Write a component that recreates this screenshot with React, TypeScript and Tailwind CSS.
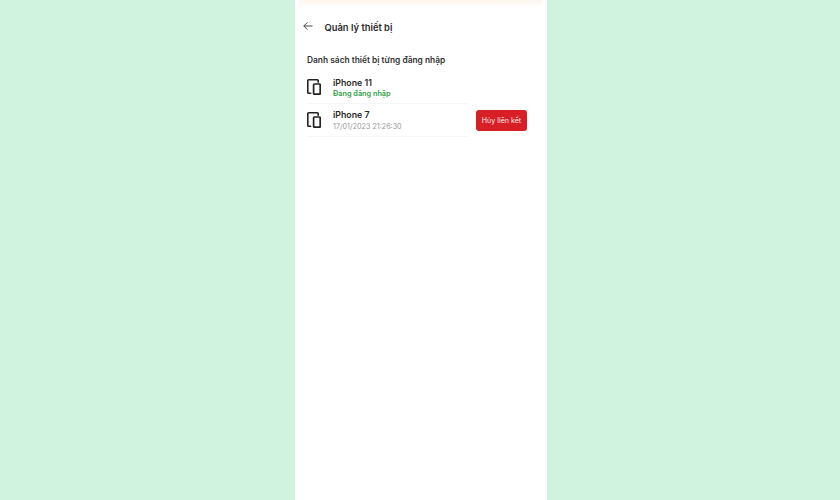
const DeviceIcon = () => (
  <svg width="14" height="16" viewBox="0 0 14 16" fill="none" stroke="#222" strokeWidth="1.6" className="shrink-0">
    <path d="M4.2 14.2H1.6A.8.8 0 0 1 .8 13.4V1.6A.8.8 0 0 1 1.6 .8H10.4A.8.8 0 0 1 11.2 1.6V3.8" />
    <rect x="6.6" y="5" width="6.6" height="10.2" rx=".8" strokeWidth="1.7" />
  </svg>
);

export default function App() {
  return (
    <div className="h-[500px] w-[840px] overflow-hidden bg-[#cff3de] flex pl-[295px] font-['Inter',sans-serif] antialiased">
      <div className="w-[252px] h-full bg-white flex flex-col">
        {/* --- HEADER --- */}
        <div className="h-[7px] mx-[5px] bg-gradient-to-b from-[#fef6ee] to-white" />
        <header className="flex items-center mt-[13px] h-[16px] pl-[8px]">
          <svg width="10" height="10" viewBox="0 0 10 10" fill="none" stroke="#333" strokeWidth="0.9" className="-mt-[5px]">
            <path d="M9.5 5H.8M4.4 1.4.8 5l3.6 3.6" />
          </svg>
          <h1 className="ml-[11.5px] text-[9.4px] font-semibold text-[#2a2a2a] leading-none">Quản lý thiết bị</h1>
        </header>

        <h2 className="mt-[18px] ml-[12px] text-[8.4px] font-semibold text-[#333] leading-[12px]">
          Danh sách thiết bị từng đăng nhập
        </h2>

        {/* --- DEVICE LIST --- */}
        <div className="mt-[5px] ml-[12px] mr-[20px]">
          <div className="flex items-center w-[161px] h-[33px] border-b border-[#f6f6f6]">
            <DeviceIcon />
            <div className="ml-[12px] mt-[2px]">
              <div className="text-[8.8px] font-semibold text-[#2a2a2a] leading-[12px]">iPhone 11</div>
              <div className="text-[7.3px] font-semibold text-[#2ea043] leading-[10px]">Đang đăng nhập</div>
            </div>
          </div>
          <div className="flex items-center h-[33px]">
            <div className="flex items-center w-[161px] self-stretch border-b border-[#f6f6f6]">
              <DeviceIcon />
              <div className="ml-[12px] mt-[1px]">
                <div className="text-[8.8px] font-semibold text-[#2a2a2a] leading-[12px]">iPhone 7</div>
                <div className="text-[7.2px] text-[#999] leading-[11px]">17/01/2023 21:26:30</div>
              </div>
            </div>
            <button className="ml-[8px] w-[51px] h-[21px] rounded-[3px] bg-[#d91f26] text-[#fbeaea] text-[7.1px] leading-none">
              Hủy liên kết
            </button>
          </div>
        </div>
      </div>
    </div>
  );
}
